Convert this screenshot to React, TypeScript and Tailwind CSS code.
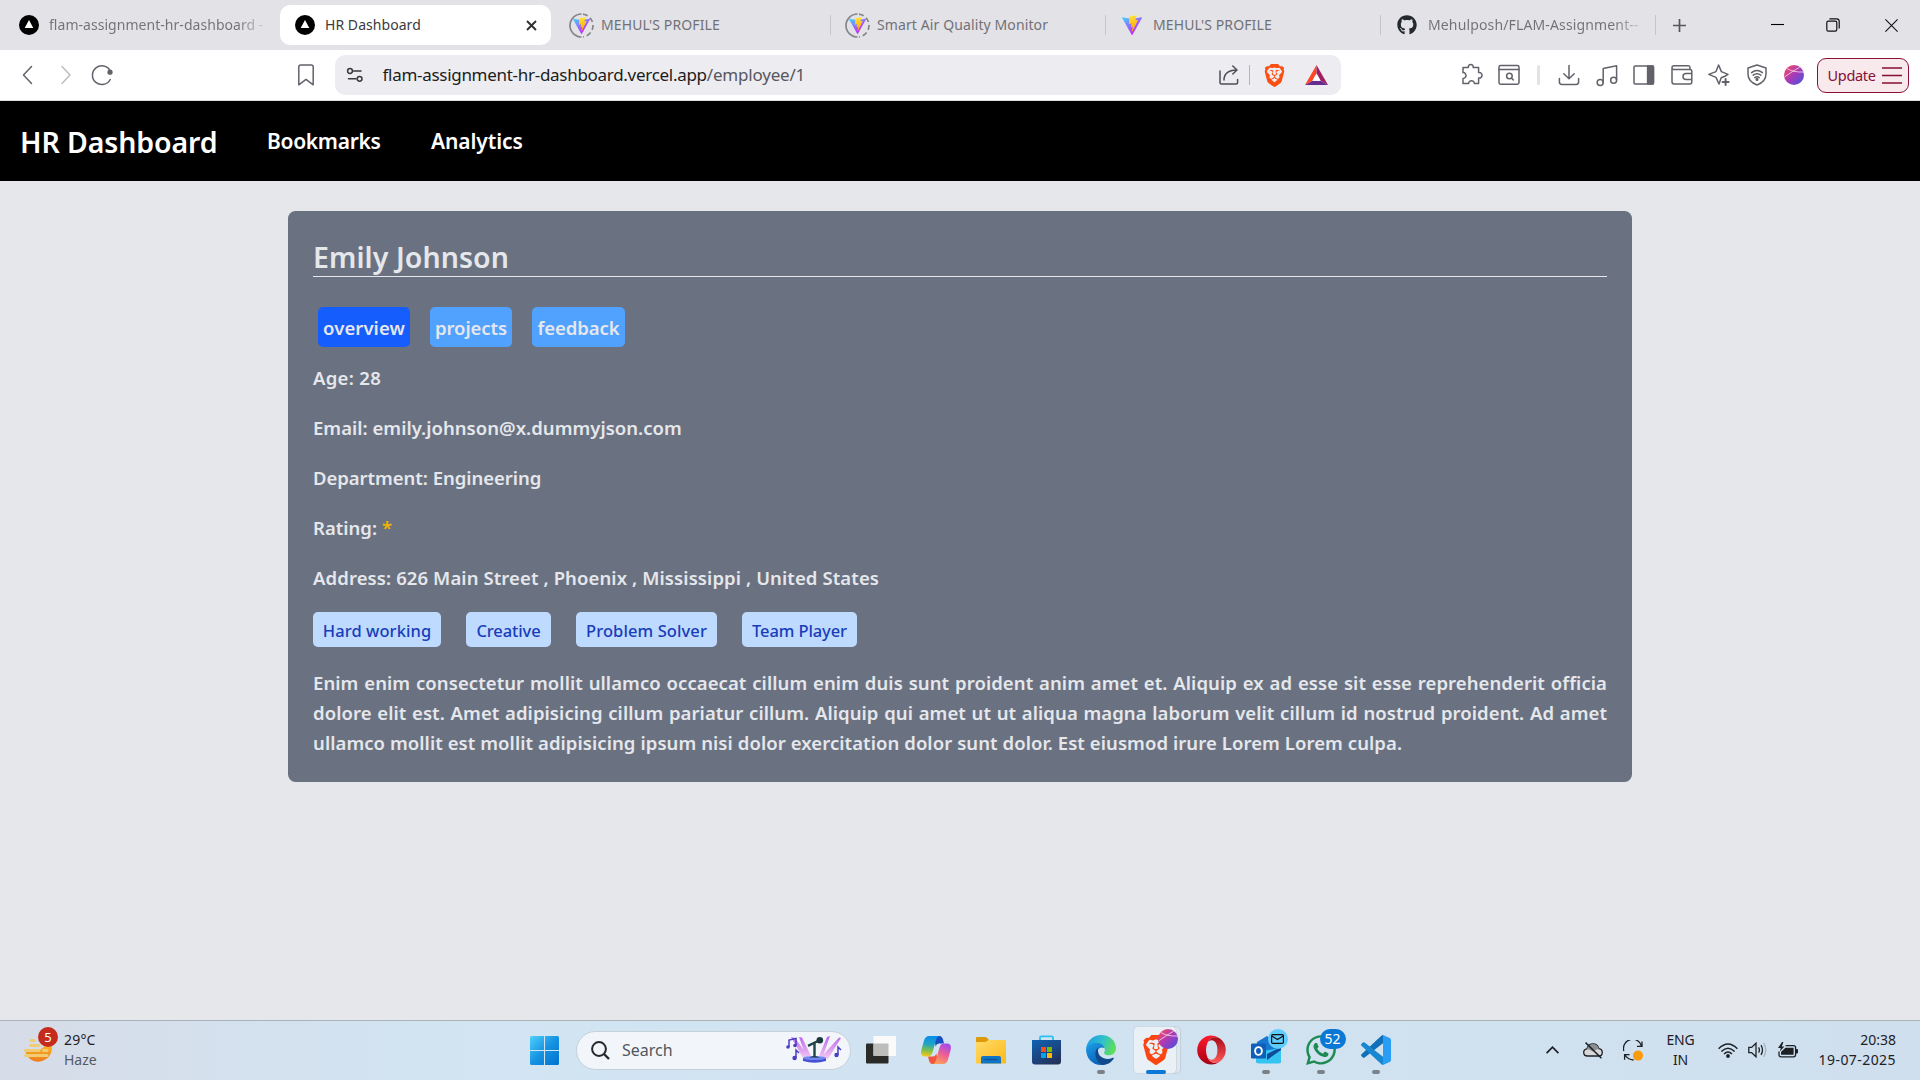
import type { ReactNode } from 'react';
import { SiBrave } from 'react-icons/si';
import { FaGithub, FaWhatsapp } from 'react-icons/fa';

function VercelIcon() {
  return (
    <svg width="20" height="20" viewBox="0 0 20 20" className="shrink-0">
      <circle cx="10" cy="10" r="10" fill="#000" />
      <path d="M10 5 L14.3 13 H5.7 Z" fill="#fff" />
    </svg>
  );
}

function ViteIcon({ size }: { size: number }) {
  return (
    <svg width={size} height={size} viewBox="0 0 256 257" className="shrink-0">
      <defs>
        <linearGradient id="viteA" x1="-.8%" x2="57.6%" y1="7.7%" y2="78.4%">
          <stop offset="0%" stopColor="#41D1FF" />
          <stop offset="100%" stopColor="#BD34FE" />
        </linearGradient>
        <linearGradient id="viteB" x1="43.4%" x2="50.3%" y1="2.2%" y2="89%">
          <stop offset="0%" stopColor="#FFEA83" />
          <stop offset="8.3%" stopColor="#FFDD35" />
          <stop offset="100%" stopColor="#FFA800" />
        </linearGradient>
      </defs>
      <path fill="url(#viteA)" d="M255.153 37.938L134.897 252.976c-2.483 4.44-8.862 4.466-11.382.048L.875 37.958c-2.746-4.814 1.371-10.646 6.827-9.67l120.385 21.517a6.537 6.537 0 0 0 2.322-.004l117.867-21.483c5.438-.991 9.574 4.796 6.877 9.62Z" />
      <path fill="url(#viteB)" d="M185.432.063L96.44 17.501a3.268 3.268 0 0 0-2.634 3.014l-5.474 92.456a3.268 3.268 0 0 0 3.997 3.378l24.777-5.718c2.318-.535 4.413 1.507 3.936 3.838l-7.361 36.047c-.495 2.426 1.782 4.5 4.151 3.78l15.304-4.649c2.372-.72 4.652 1.36 4.15 3.788l-11.698 56.621c-.732 3.542 3.979 5.473 5.943 2.437l1.313-2.028l72.516-144.72c1.215-2.423-.88-5.186-3.54-4.672l-25.505 4.922c-2.396.462-4.435-1.77-3.759-4.114l16.646-57.705c.677-2.35-1.37-4.583-3.769-4.113Z" />
    </svg>
  );
}

function RingedVite() {
  return (
    <span className="relative flex size-[25px] shrink-0 items-center justify-center">
      <svg width="25" height="25" viewBox="0 0 25 25" fill="none" stroke="#85858b" strokeWidth="1.7" className="absolute inset-0">
        <path d="M12.5 1 A11.5 11.5 0 0 0 12.5 24" />
        <path d="M14 1.1 A11.5 11.5 0 0 1 14 23.9" strokeDasharray="5 3" />
      </svg>
      <ViteIcon size={17} />
    </span>
  );
}

function Tab({ className, children }: { className: string; children: ReactNode }) {
  return (
    <div className={`flex h-full shrink-0 items-center ${className}`}>
      {children}
      <span className="ml-auto h-5 w-px bg-[#c5c5cb]" />
    </div>
  );
}

const tabText = 'text-sm leading-5 text-[#717176] whitespace-nowrap';

function TabStrip() {
  return (
    <div className="flex h-[50px] items-start bg-[#e3e2e7]">
      <div className="flex h-[50px] w-[280px] shrink-0 items-center pl-[19px]">
        <VercelIcon />
        <span className="ml-2.5 bg-linear-to-r from-[#717176] from-88% to-[#cfcfd4] bg-clip-text text-sm leading-5 tracking-[0.04px] whitespace-nowrap text-transparent">
          flam-assignment-hr-dashboard -
        </span>
      </div>
      <div className="mt-[5px] flex h-10 w-[271px] shrink-0 items-center rounded-[10px] bg-white pr-[14px] pl-[15px]">
        <VercelIcon />
        <span className="ml-2.5 text-sm leading-5 tracking-[0.05px] text-[#3b3b40]">HR Dashboard</span>
        <svg width="11" height="11" viewBox="0 0 11 11" stroke="#303034" strokeWidth="1.9" className="ml-auto">
          <path d="M1 1 L10 10 M10 1 L1 10" />
        </svg>
      </div>
      <Tab className="h-[50px] w-[280px] pl-[18px]">
        <RingedVite />
        <span className={`ml-[7px] tracking-[0.13px] ${tabText}`}>MEHUL'S PROFILE</span>
      </Tab>
      <Tab className="h-[50px] w-[275px] pl-[14px]">
        <RingedVite />
        <span className={`ml-[7px] tracking-[0.11px] ${tabText}`}>Smart Air Quality Monitor</span>
      </Tab>
      <Tab className="h-[50px] w-[275px] pl-4">
        <ViteIcon size={20} />
        <span className={`ml-[11px] tracking-[0.12px] ${tabText}`}>MEHUL'S PROFILE</span>
      </Tab>
      <Tab className="h-[50px] w-[275px] pl-4">
        <FaGithub size={20} color="#24292f" className="shrink-0" />
        <span className="ml-[11px] bg-linear-to-r from-[#717176] from-88% to-[#c4c4c9] bg-clip-text text-sm leading-5 tracking-[0.14px] whitespace-nowrap text-transparent">
          Mehulposh/FLAM-Assignment--
        </span>
      </Tab>
      <div className="flex h-[50px] items-center">
        <svg width="13" height="13" viewBox="0 0 13 13" stroke="#55555a" strokeWidth="1.7" className="ml-[17px]">
          <path d="M6.5 0 V13 M0 6.5 H13" />
        </svg>
        <svg width="13" height="13" viewBox="0 0 13 13" className="mt-[-3px] ml-[85px]">
          <path d="M0 7.5 H13" stroke="#000" strokeWidth="1.1" />
        </svg>
        <svg width="14" height="14" viewBox="0 0 14 14" fill="none" stroke="#111" strokeWidth="1.2" className="ml-[42px]">
          <rect x=".8" y="3.2" width="10" height="10" rx="1.6" />
          <path d="M3.4 .9 H10.6 Q13.2 .9 13.2 3.5 V10.6" />
        </svg>
        <svg width="13" height="13" viewBox="0 0 13 13" stroke="#111" strokeWidth="1.1" className="ml-[45px]">
          <path d="M.4 .4 L12.6 12.6 M12.6 .4 L.4 12.6" />
        </svg>
      </div>
    </div>
  );
}

function ToolIcon({ className = '', color = '#62626a', children }: { className?: string; color?: string; children: ReactNode }) {
  return (
    <svg
      width="24"
      height="24"
      viewBox="0 0 24 24"
      fill="none"
      stroke={color}
      strokeWidth="1.5"
      strokeLinecap="round"
      strokeLinejoin="round"
      className={`shrink-0 ${className}`}
    >
      {children}
    </svg>
  );
}

function Avatar({ size, className = '' }: { size: number; className?: string }) {
  return (
    <svg width={size} height={size} viewBox="0 0 20 20" className={`shrink-0 ${className}`}>
      <defs>
        <linearGradient id="avatar" x1="0" y1="0" x2="1" y2="1">
          <stop offset="10%" stopColor="#ef4a68" />
          <stop offset="50%" stopColor="#a63ab8" />
          <stop offset="95%" stopColor="#4b52e0" />
        </linearGradient>
      </defs>
      <circle cx="10" cy="10" r="10" fill="url(#avatar)" />
      <path d="M3 3.6 Q9 7.4 19.4 7 M1 11.6 Q8 6.6 15.6 2.2" fill="none" stroke="#f6c9e4" strokeWidth=".9" />
    </svg>
  );
}

function Toolbar() {
  return (
    <div className="flex h-[51px] items-center border-b border-[#dcdce1] bg-white">
      <ToolIcon className="ml-4"><path d="M15.5 3.5 L7.5 12 L15.5 20.5" /></ToolIcon>
      <ToolIcon className="ml-3.5" color="#bdbdc2"><path d="M8 3.5 L16 12 L8 20.5" /></ToolIcon>
      <ToolIcon className="ml-3">
        <path d="M20.2 16.5 A9.4 9.4 0 1 1 20.2 7.8" />
        <circle cx="20" cy="9.2" r="2.6" fill="#62626a" stroke="none" />
      </ToolIcon>
      <ToolIcon className="ml-[180px]">
        <path d="M4.8 4 Q4.8 2 6.8 2 H17.2 Q19.2 2 19.2 4 V21.8 L12 16.4 L4.8 21.8 Z" />
      </ToolIcon>
      <div className="ml-[17px] flex h-10 w-[1006px] shrink-0 items-center rounded-[10px] bg-[#edecf1]">
        <ToolIcon className="ml-2" color="#38383d">
          <circle cx="7" cy="8" r="2.4" />
          <path d="M10.5 8 H18 M5.5 15.8 H13" />
          <circle cx="16.6" cy="15.8" r="2.4" />
        </ToolIcon>
        <span className="ml-[15.5px] text-[17px] leading-6 tracking-[-0.29px] whitespace-nowrap text-[#1c1c20]">
          flam-assignment-hr-dashboard.vercel.app<span className="tracking-[-0.2px] text-[#57575e]">/employee/1</span>
        </span>
        <ToolIcon className="ml-auto" color="#4d4d54">
          <path d="M3 8 V19.5 Q3 21 4.5 21 H19 Q20.6 21 20.6 19.5 V16.5" />
          <path d="M7 17 Q7 7.5 19.5 7 M15.8 3 L20 7 L15.8 11" />
        </ToolIcon>
        <span className="ml-2 h-5 w-px bg-[#b4b4ba]" />
        <SiBrave size={23} color="#fb4f12" className="ml-[13px] shrink-0" />
        <svg width="23" height="20" viewBox="0 0 23 20" className="mr-[13px] ml-[19px] shrink-0">
          <path d="M11.5 0 L0 20 L7.4 15.8 L11.5 8.6 Z" fill="#ff4724" />
          <path d="M11.5 0 L23 20 L15.6 15.8 L11.5 8.6 Z" fill="#9e1f63" />
          <path d="M0 20 H23 L15.6 15.8 H7.4 Z" fill="#662d91" />
          <path d="M11.5 8.6 L7.4 15.8 H15.6 Z" fill="#fff" />
        </svg>
      </div>
      <ToolIcon className="ml-[119px]">
        <path d="M3 4.6 H8.4 C7.6 .6 14 .6 13.2 4.6 H18.6 V9.6 C23.2 9 23.2 15.6 18.6 15 V20.6 H14.4 C14.6 16.8 8.4 16.8 8.6 20.6 H3 V15.4 C7 15.6 7 9.4 3 9.6 Z" />
      </ToolIcon>
      <ToolIcon className="ml-[12.5px]">
        <rect x="2" y="2.6" width="20" height="18.6" rx="1.6" />
        <path d="M2 6.4 H22" />
        <circle cx="12.4" cy="13" r="2.8" />
        <path d="M14.6 15.2 L16.4 17" />
      </ToolIcon>
      <span className="ml-4 h-5 w-[3px] rounded-sm bg-[#e3e2e8]" />
      <ToolIcon className="ml-[17px]">
        <path d="M12 2.5 V15.5 M6.8 10.8 L12 15.8 L17.2 10.8 M2.4 15.5 V19 Q2.4 21.4 4.8 21.4 H19.2 Q21.6 21.4 21.6 19 V15.5" />
      </ToolIcon>
      <ToolIcon className="ml-3.5">
        <circle cx="5.2" cy="19.4" r="3" />
        <circle cx="18.6" cy="17.2" r="3" />
        <path d="M8.2 19.4 V5.4 L21.6 2.8 V17" />
      </ToolIcon>
      <ToolIcon className="ml-[13px]">
        <rect x="2" y="3" width="19.6" height="18" rx="1.2" />
        <path d="M15.6 3 H21 V21 H15.6 Z" fill="#62626a" />
      </ToolIcon>
      <ToolIcon className="ml-3.5">
        <path d="M20 6.6 V4.6 Q20 2.8 18.4 2.8 H4 Q2 2.8 2 4.8 V18.8 Q2 21 4 21 H19.8 Q21.8 21 21.8 19 V8.4 Q21.8 6.6 20 6.6 H3.4 Q2 6.4 2 4.8 M21.8 10.6 H16 Q13 10.6 13 13.4 Q13 16.4 16 16.4 H21.8" />
      </ToolIcon>
      <ToolIcon className="ml-[13px]">
        <path d="M18.4 13 L14.2 14.8 L12 21 L9 14.4 L1.8 11.4 L9 8.6 L11.6 2 L14.4 8.6 L21 11.4 Z" />
        <path d="M18.6 16 V22 M15.6 19 H21.6" strokeWidth="2" />
      </ToolIcon>
      <ToolIcon className="ml-3.5">
        <path d="M12 2 L21 5 V11 Q21 18.6 12 22 Q3 18.6 3 11 V5 Z" />
        <path d="M6.6 9.6 Q12 5.4 17.4 9.6 M8.2 12.2 Q12 9.4 15.8 12.2 M9.8 14.6 Q12 13 14.2 14.6" />
        <circle cx="12" cy="16.4" r=".8" fill="#62626a" />
      </ToolIcon>
      <Avatar size={20} className="ml-[15px]" />
      <div className="ml-[13px] flex h-[35px] w-[92px] shrink-0 items-center justify-between rounded-[9px] border border-[#8c1038] bg-[#f7e9ec] pr-[6px] pl-2.5 text-[#860f35]">
        <span className="text-[14.5px] leading-5 tracking-[-0.3px]">Update</span>
        <svg width="20" height="17" viewBox="0 0 20 17" stroke="currentColor" strokeWidth="1.6">
          <path d="M0 1 H20 M0 8.5 H20 M0 16 H20" />
        </svg>
      </div>
    </div>
  );
}

function AppHeader() {
  return (
    <header className="flex h-20 items-center bg-black pl-5 font-semibold text-white">
      <h1 className="w-[247px] translate-y-px text-[28.5px] leading-10 font-[560] tracking-[-0.12px]">HR Dashboard</h1>
      <a className="w-[164px] text-[21px] leading-8 tracking-[-0.32px]">Bookmarks</a>
      <a className="text-[21px] leading-8 tracking-[-0.1px]">Analytics</a>
    </header>
  );
}

const skills = [
  { label: 'Hard working', className: 'w-32' },
  { label: 'Creative', className: 'w-[85px] tracking-[-0.12px]' },
  { label: 'Problem Solver', className: 'w-[141px] tracking-[0.1px]' },
  { label: 'Team Player', className: 'w-[115px] tracking-[-0.1px]' },
];

function EmployeeCard() {
  return (
    <section className="mx-auto mt-[30px] h-[571px] w-[1344px] rounded-[7.5px] bg-[#6a7282] p-[25px] text-[18.5px] leading-[30px] font-semibold tracking-[0.075px] text-gray-200">
      <h2 className="h-[41px] border-b border-gray-200 pt-px text-[28.5px] leading-10 font-[560] tracking-[0.08px]">
        Emily Johnson
      </h2>
      <div className="mt-[30px] flex h-10 gap-5 pl-[5px] text-center">
        <button className="w-[92px] rounded-[5px] bg-[#155dfc] pt-0.5">overview</button>
        <button className="w-[82px] rounded-[5px] bg-[#51a2ff] pt-0.5 tracking-[-0.08px]">projects</button>
        <button className="w-[93px] rounded-[5px] bg-[#51a2ff] pt-0.5 tracking-[-0.08px]">feedback</button>
      </div>
      <div className="mt-4 flex flex-col gap-5">
        <p className="tracking-[0.3px]">Age: 28</p>
        <p className="tracking-[0.03px]">Email: emily.johnson@x.dummyjson.com</p>
        <p className="tracking-[-0.04px]">Department: Engineering</p>
        <p className="tracking-[0.02px]">Rating: <span className="text-[#f0b100]">*</span></p>
        <p className="tracking-[0.1px]">Address: 626 Main Street , Phoenix , Mississippi , United States</p>
      </div>
      <div className="mt-[19px] flex h-[35px] gap-[25px] text-center text-[16.5px] leading-[35px] font-medium text-[#193cb8]">
        {skills.map((s) => (
          <span key={s.label} className={`rounded-[5px] bg-[#bedbff] pt-px ${s.className}`}>
            {s.label}
          </span>
        ))}
      </div>
      <div className="mt-[21px] whitespace-nowrap">
        <p className="[text-align-last:justify]">Enim enim consectetur mollit ullamco occaecat cillum enim duis sunt proident anim amet et. Aliquip ex ad esse sit esse reprehenderit officia</p>
        <p className="[text-align-last:justify]">dolore elit est. Amet adipisicing cillum pariatur cillum. Aliquip qui amet ut ut aliqua magna laborum velit cillum id nostrud proident. Ad amet</p>
        <p>ullamco mollit est mollit adipisicing ipsum nisi dolor exercitation dolor sunt dolor. Est eiusmod irure Lorem Lorem culpa.</p>
      </div>
    </section>
  );
}

function WeatherIcon() {
  return (
    <span className="relative h-[34px] w-[34px] shrink-0">
      <svg width="34" height="34" viewBox="0 0 34 34">
        <defs>
          <linearGradient id="sun" x1="0" y1="0" x2="0" y2="1">
            <stop offset="0" stopColor="#f9b826" />
            <stop offset="1" stopColor="#f07b1a" />
          </linearGradient>
        </defs>
        <path d="M1.5 17 H16 L22 12 L28 13 Q28.5 21 23 25.6 Q15 31.4 6.6 26.4 Q1.6 22.6 1.5 17 Z" fill="url(#sun)" />
        <path d="M7 7.5 H10 M6.5 12.5 H15 M1.5 17.5 H15 M19.5 17.5 H23 M1.5 22.5 H23" stroke="#f0cd74" strokeWidth="3" strokeLinecap="round" />
      </svg>
      <span className="absolute top-[-6px] left-[14px] flex size-5 items-center justify-center rounded-full bg-[#c42b1c] text-[13px] text-white">5</span>
    </span>
  );
}

function StartIcon() {
  return (
    <svg width="29" height="29" viewBox="0 0 29 29" className="shrink-0">
      <defs>
        <linearGradient id="win" gradientUnits="userSpaceOnUse" x1="0" y1="0" x2="29" y2="29">
          <stop offset="0" stopColor="#4fd0fc" />
          <stop offset=".5" stopColor="#1593e2" />
          <stop offset="1" stopColor="#0070ce" />
        </linearGradient>
      </defs>
      <path d="M1.5 0 H14 V14 H0 V1.5 Q0 0 1.5 0 Z M15 0 H27.5 Q29 0 29 1.5 V14 H15 Z M0 15 H14 V29 H1.5 Q0 29 0 27.5 Z M15 15 H29 V27.5 Q29 29 27.5 29 H15 Z" fill="url(#win)" />
    </svg>
  );
}

function MicStage() {
  return (
    <svg width="56" height="28" viewBox="0 0 56 28" className="shrink-0">
      <defs>
        <linearGradient id="beam" x1="0" y1="0" x2="0" y2="1">
          <stop offset="0" stopColor="#b34be8" />
          <stop offset="1" stopColor="#f6c3f0" />
        </linearGradient>
      </defs>
      <path d="M5 1 L9 2 L22 20 L17 22 Z M13 1 L16 1.5 L25 20 L20 21 Z M55 2 L53 1.5 L36 20 L42 23 Z M44 0 L41 1 L33 20 L37 20 Z" fill="url(#beam)" opacity=".85" />
      <path d="M3 11 V4 L10 2.5 V9 M10 22 V14 L13 17 M52 19 V11 L55 14" fill="none" stroke="#4a3fc0" strokeWidth="1.5" />
      <g fill="#4a3fc0"><circle cx="2" cy="11" r="1.8" /><circle cx="9" cy="9.5" r="1.8" /><circle cx="8.6" cy="22" r="2.2" /><circle cx="50.5" cy="19" r="2.2" /></g>
      <path d="M17 22 H40 V25 Q28.5 28.5 17 25 Z" fill="#4750cf" />
      <ellipse cx="28.5" cy="22" rx="11.5" ry="2" fill="#7386f5" />
      <path d="M23 21.6 Q28.5 18.5 34 21.6 Z" fill="#16353a" />
      <path d="M28.5 20 V7.5 M22 9.8 L32 5" stroke="#204248" strokeWidth="2.4" />
      <circle cx="33.8" cy="4.2" r="3.3" fill="#18383d" />
    </svg>
  );
}

function TaskViewIcon() {
  return (
    <svg width="30" height="28" viewBox="0 0 30 28">
      <rect x="0" y="7.5" width="22.5" height="20" rx="1" fill="#2a2a28" />
      <rect x="7.5" y="0" width="22.5" height="20" rx="1" fill="#fafafa" />
      <path d="M7.5 7.5 H22.5 V20 H7.5 Z" fill="#bdbdbb" />
    </svg>
  );
}

function CopilotIcon() {
  return (
    <svg width="30" height="28" viewBox="0 0 30 28">
      <defs>
        <linearGradient id="cpA" x1=".4" y1="0" x2=".3" y2="1">
          <stop offset="0" stopColor="#0a8fe8" />
          <stop offset=".4" stopColor="#22a4c4" />
          <stop offset=".7" stopColor="#7fbf4a" />
          <stop offset="1" stopColor="#f5c81c" />
        </linearGradient>
        <linearGradient id="cpB" x1=".7" y1="0" x2=".3" y2="1">
          <stop offset="0" stopColor="#a44af0" />
          <stop offset=".5" stopColor="#ee5f92" />
          <stop offset="1" stopColor="#fda05a" />
        </linearGradient>
      </defs>
      <path d="M13 0 H18.5 Q21 0 22 3.5 L23 7.5 H18 Q15.5 7.5 14.6 10.4 Z" fill="#1a4fc4" />
      <path d="M17 28 H11.5 Q9 28 8 24.5 L7 20.5 H12 Q14.5 20.5 15.4 17.6 Z" fill="#f0573c" />
      <path d="M8 0 H18 Q16 .5 15 4 L11.6 16 Q10.5 20.4 7 20.4 H4 Q-1.2 20.4 .5 13.5 L3 4.5 Q4.4 0 8 0 Z" fill="url(#cpA)" />
      <path d="M22 28 H12 Q14 27.5 15 24 L18.4 12 Q19.5 7.6 23 7.6 H26 Q31.2 7.6 29.5 14.5 L27 23.5 Q25.6 28 22 28 Z" fill="url(#cpB)" />
    </svg>
  );
}

function FolderIcon() {
  return (
    <svg width="30" height="28" viewBox="0 0 30 28">
      <defs>
        <linearGradient id="fold" x1="0" y1="0" x2="1" y2="1">
          <stop offset="0" stopColor="#ffdb6b" />
          <stop offset="1" stopColor="#fdb917" />
        </linearGradient>
      </defs>
      <path d="M0 2 Q0 1 1 1 H10 L13 4 L10 8 H0 Z" fill="#dd9a0a" />
      <path d="M0 6 H9.5 L12.5 4 H29 Q30 4 30 5 V27.4 H0 Z" fill="url(#fold)" />
      <path d="M5 27.4 V22 Q5 20 7 20 H23 Q25 20 25 22 V27.4 Z" fill="#1274c4" />
      <path d="M8.5 23.5 H21.5" stroke="#0b4f94" strokeWidth="1.2" />
    </svg>
  );
}

function StoreIcon() {
  return (
    <svg width="29" height="30" viewBox="0 0 29 30">
      <defs>
        <linearGradient id="store" x1="0" y1="0" x2=".6" y2="1">
          <stop offset="0" stopColor="#0f62b5" />
          <stop offset="1" stopColor="#23345f" />
        </linearGradient>
      </defs>
      <path d="M8 6 V2.8 Q8 1.4 9.4 1.4 H19.6 Q21 1.4 21 2.8 V6" fill="none" stroke="#2cc0f2" strokeWidth="1.8" />
      <path d="M0 5 H29 V26.5 Q29 29.5 26 29.5 H3 Q0 29.5 0 26.5 Z" fill="url(#store)" />
      <path d="M9 12 H14 V17 H9 Z" fill="#f25022" />
      <path d="M15 12 H20 V17 H15 Z" fill="#7fba00" />
      <path d="M9 18 H14 V23 H9 Z" fill="#00a4ef" />
      <path d="M15 18 H20 V23 H15 Z" fill="#ffb900" />
    </svg>
  );
}

function EdgeIcon() {
  return (
    <svg width="30" height="30" viewBox="0 0 30 30">
      <defs>
        <linearGradient id="edA" x1="0" y1=".3" x2="1" y2=".6">
          <stop offset="0" stopColor="#1d9de0" />
          <stop offset=".5" stopColor="#2fc0cc" />
          <stop offset="1" stopColor="#62e04f" />
        </linearGradient>
        <linearGradient id="edB" x1="0" y1="0" x2=".5" y2="1">
          <stop offset="0" stopColor="#1d9fe8" />
          <stop offset="1" stopColor="#0c62b8" />
        </linearGradient>
      </defs>
      <path d="M0 14 C1 5 8 0 15 0 C24 0 30 6 30 13 C30 18 26.6 20.2 23 20.2 C19 20.2 17.4 18.6 18.4 17 C20 14 18 9.6 12.6 9.6 C6 9.4 1 12 0 14 Z" fill="url(#edA)" />
      <path d="M0 14 C1.6 10 6 7.6 10.6 7.8 C15 8 18 10.6 18.8 13.4 C14 9.8 8 17 12 23 C14 27 17 29 19 29.4 C10 32 0 26 0 14 Z" fill="url(#edB)" />
      <path d="M12.4 12.4 C7 16 9 26 16 29.8 C21 30.4 25.8 27.2 27.8 23.6 C28.2 22.8 27.6 22.4 26.8 22.8 C20 26 12 22.4 12 15.6 C12 14.4 12 13.4 12.4 12.4 Z" fill="#114a8b" />
    </svg>
  );
}

function OperaIcon() {
  return (
    <svg width="29" height="30" viewBox="0 0 29 30">
      <defs>
        <linearGradient id="opA" x1="0" y1="0" x2="0" y2="1">
          <stop offset="0" stopColor="#ff1b2d" />
          <stop offset="1" stopColor="#a70014" />
        </linearGradient>
        <linearGradient id="opB" x1="0" y1="0" x2="0" y2="1">
          <stop offset="0" stopColor="#a80b18" />
          <stop offset="1" stopColor="#ff5a5a" />
        </linearGradient>
      </defs>
      <path d="M14.5 .4 A14.3 14.6 0 0 0 14.5 29.6 Q19 29.6 23 26.6 Q14 30 10.5 22.4 Q7.4 14.6 10.8 7 Q14.4 0 23 3.4 Q19 .4 14.5 .4 Z" fill="url(#opA)" />
      <path d="M10.8 7 Q14.4 0 23 3.4 Q28.8 8 28.8 15 Q28.8 22 23 26.6 Q14.4 30 10.6 22.8 Q14 26.4 17.6 23.6 Q20.4 21 20.4 15 Q20.4 9 17.6 6.4 Q14 3.6 10.8 7 Z" fill="url(#opB)" />
    </svg>
  );
}

function OutlookIcon() {
  return (
    <svg width="30" height="28" viewBox="0 0 30 28">
      <path d="M6 6 L16 0 L30 9 V25 Q30 27 28 27 H8 Q5 27 5 25 Z" fill="#1877cf" />
      <path d="M5 16 L30 12 V25 Q30 27.4 28 27.4 H8 Q5 27.4 5 25 Z" fill="#35c3f1" />
      <path d="M16 18 L30 11 V14 L16 24 Z" fill="#0f4b99" />
      <rect x="0" y="7.5" width="15" height="15" rx="1.2" fill="#0f5fb8" />
      <ellipse cx="7.5" cy="15" rx="3.4" ry="3.9" fill="none" stroke="#fff" strokeWidth="1.9" />
    </svg>
  );
}

function CodeIcon() {
  return (
    <svg width="30" height="30" viewBox="0 0 30 30">
      <path d="M22 0 L28.6 3 Q30 3.6 30 5 V25 Q30 26.4 28.6 27 L22 30 Z" fill="#2a9df4" />
      <path d="M22 0 V8.2 L3.6 22.4 Q2.6 23 1.8 22.4 L.4 21 Q-.4 20 .5 19.2 L20.4 .8 Q21.4 0 22 0 Z" fill="#1070b8" />
      <path d="M22 30 V21.8 L3.6 7.6 Q2.6 7 1.8 7.6 L.4 9 Q-.4 10 .5 10.8 L20.4 29.2 Q21.4 30 22 30 Z" fill="#1787d2" />
    </svg>
  );
}

function TaskCell({ children, running = false }: { children: ReactNode; running?: boolean }) {
  return (
    <div className="relative flex h-12 w-[55px] shrink-0 items-center justify-center">
      {children}
      {running && <span className="absolute bottom-0 left-[23.5px] h-1 w-2 rounded-full bg-[#7b8188]" />}
    </div>
  );
}

function Taskbar() {
  return (
    <footer className="flex h-[60px] items-center border-t border-[#a9b3bc] bg-linear-to-r from-[#d6dce8] via-[#d2e5f3] via-25% to-[#cfdfee] pb-px text-sm leading-5 text-[#1d2126]">
      <div className="flex w-[530px] shrink-0 items-center pl-[24px]">
        <WeatherIcon />
        <div className="-mt-px ml-1.5">
          <p className="tracking-[0.2px]">29°C</p>
          <p className="text-[#565b62]">Haze</p>
        </div>
      </div>
      <StartIcon />
      <div className="ml-[17px] flex h-[39px] w-[275px] shrink-0 items-center rounded-full border border-[#c4d0da] bg-[#f2f6fa] pr-2 pl-3.5">
        <svg width="19" height="19" viewBox="0 0 19 19" fill="none" stroke="#26282c" strokeWidth="2">
          <circle cx="8" cy="8" r="6.9" />
          <path d="M13 13 L18 18" strokeWidth="2.4" />
        </svg>
        <span className="ml-3 text-base text-[#51565b]">Search</span>
        <span className="ml-auto"><MicStage /></span>
      </div>
      <div className="ml-[2.5px] flex">
        <TaskCell><TaskViewIcon /></TaskCell>
        <TaskCell><CopilotIcon /></TaskCell>
        <TaskCell><FolderIcon /></TaskCell>
        <TaskCell><StoreIcon /></TaskCell>
        <TaskCell running><EdgeIcon /></TaskCell>
        <div className="relative flex h-12 w-[55px] shrink-0 items-center justify-center">
          <span className="absolute inset-y-0 left-[10px] w-[42px] rounded-[5px] border border-[#c3ced8] bg-[#dde7ef]" />
          <span className="absolute inset-y-0 left-[4px] w-[44px] rounded-[5px] border border-[#cdd8e1] bg-[#e9f0f6]" />
          <SiBrave size={30} color="#fb4612" className="relative" />
          <Avatar size={20} className="absolute top-[3px] left-[29px]" />
          <span className="absolute bottom-0 left-[17.5px] h-1 w-5 rounded-full bg-[#0a78d4]" />
        </div>
        <TaskCell><OperaIcon /></TaskCell>
        <TaskCell running>
          <OutlookIcon />
          <span className="absolute top-[3px] left-[29px] flex size-5 items-center justify-center rounded-full bg-[#60cdff]">
            <svg width="13" height="10" viewBox="0 0 13 10" fill="none" stroke="#111" strokeWidth="1.2">
              <rect x=".6" y=".6" width="11.8" height="8.8" rx="1.2" />
              <path d="M.8 2 L6.5 5.6 L12.2 2" />
            </svg>
          </span>
        </TaskCell>
        <TaskCell running>
          <FaWhatsapp size={34} color="#1d8a53" />
          <span className="absolute top-[3px] left-[26px] flex h-5 w-[26px] items-center justify-center rounded-full bg-[#0a78d4] text-sm text-white">52</span>
        </TaskCell>
        <TaskCell running><CodeIcon /></TaskCell>
      </div>
      <svg width="13" height="8" viewBox="0 0 13 8" fill="none" stroke="#1d2126" strokeWidth="1.7" className="ml-[142px] shrink-0">
        <path d="M.6 7.2 L6.5 1.2 L12.4 7.2" />
      </svg>
      <svg width="20" height="17" viewBox="0 0 20 17" fill="none" stroke="#1d2126" strokeWidth="1.3" className="ml-6 shrink-0">
        <path d="M4.6 14 Q.7 14 .7 10.4 Q.7 7.2 4 6.8 Q5.4 2 10 2 Q14.4 2 15.8 6.6 Q19.3 7 19.3 10.4 Q19.3 14 15.4 14 Z" fill="#d8d8d8" />
        <path d="M4 6.8 Q5.4 2 10 2 Q14.4 2 15.8 6.6 L10 9.6 Z" fill="#8c8f92" stroke="none" />
        <path d="M2.6 .6 L18.4 16.2" strokeWidth="1.5" />
      </svg>
      <svg width="21" height="21" viewBox="0 0 21 21" fill="none" stroke="#1d2126" strokeWidth="1.3" className="ml-5 shrink-0">
        <path d="M.8 11 A9 9 0 0 1 18.6 6 M19 1.4 V6.4 H14 M10.6 20 Q4.6 19.4 2 15 M6.6 14.6 H1.6 V19.8" />
        <circle cx="15" cy="15.6" r="5" fill="#fb9b0b" stroke="none" />
      </svg>
      <div className="-mt-px ml-[15px] w-[44px] shrink-0 text-center tracking-[-0.2px]">
        <p>ENG</p>
        <p>IN</p>
      </div>
      <svg width="20" height="15" viewBox="0 0 20 15" fill="none" stroke="#1d2126" strokeWidth="1.4" className="ml-[15px] shrink-0">
        <path d="M.6 5.8 Q10 -3.8 19.4 5.8 M3.4 8.6 Q10 2 16.6 8.6 M6 11 Q10 7.2 14 11" />
        <circle cx="10" cy="13" r="1.9" fill="#1d2126" stroke="none" />
      </svg>
      <svg width="20" height="16" viewBox="0 0 20 16" fill="none" stroke="#1d2126" strokeWidth="1.3" className="ml-2.5 shrink-0">
        <path d="M.8 5.4 H3.6 L8 1.2 V14.8 L3.6 10.6 H.8 Z M10.6 5.4 Q12.2 8 10.6 10.6 M13 3.2 Q16 8 13 12.8" />
        <path d="M15.6 1.2 Q20 8 15.6 14.8" stroke="#a9b4be" />
      </svg>
      <svg width="21" height="16" viewBox="0 0 21 16" fill="none" stroke="#1d2126" strokeWidth="1.3" className="ml-2.5 shrink-0">
        <path d="M7.6 3.6 H15.6 Q17.6 3.6 17.6 5.6 V12.6 Q17.6 14.8 15.6 14.8 H3 Q1 14.8 1 12.6 V9.4" />
        <path d="M7.4 5.8 H15.6 V12.8 H3 V10 Z" fill="#1d2126" stroke="none" />
        <path d="M18 7 H19 Q20 7 20 8 V10.4 Q20 11.4 19 11.4 H18 Z" fill="#1d2126" stroke="none" />
        <path d="M4 0 L0 6 H2.8 L1.8 9.6 L6.4 4.4 H3.8 L5.4 0 Z" fill="#1d2126" stroke="none" />
      </svg>
      <div className="-mt-px mr-6 ml-auto shrink-0 text-right">
        <p>20:38</p>
        <p className="tracking-[0.43px]">19-07-2025</p>
      </div>
    </footer>
  );
}

export default function App() {
  return (
    <div className="flex h-[1080px] w-[1920px] flex-col overflow-hidden bg-gray-200 font-['Noto_Sans','Open_Sans',sans-serif]">
      <TabStrip />
      <Toolbar />
      <AppHeader />
      <main className="grow">
        <EmployeeCard />
      </main>
      <Taskbar />
    </div>
  );
}
